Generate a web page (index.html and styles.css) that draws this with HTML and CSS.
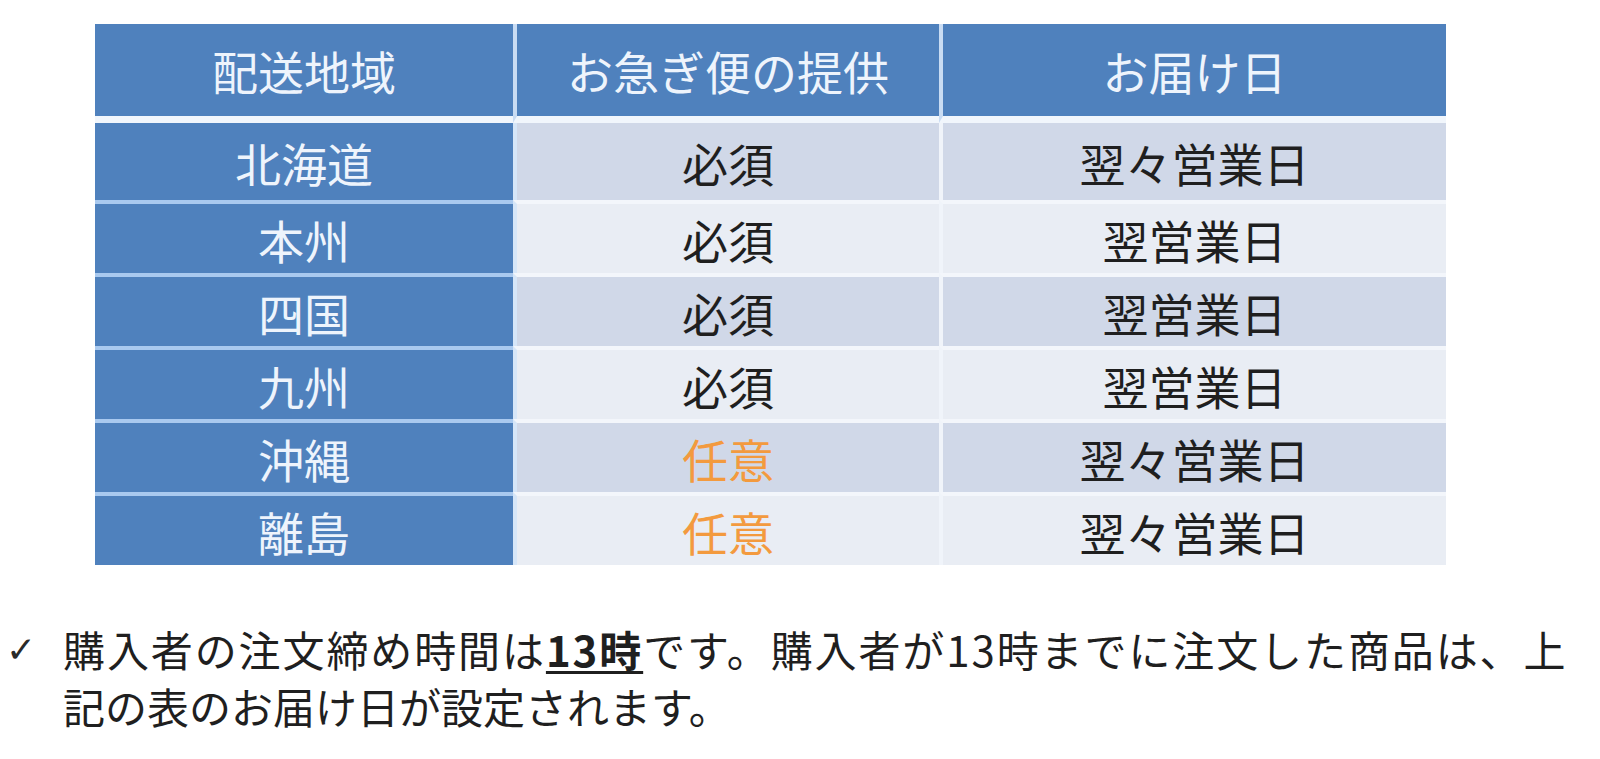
FILE: index.html
```html
<!DOCTYPE html>
<html lang="ja">
<head>
<meta charset="utf-8">
<title>配送地域とお届け日</title>
<link rel="stylesheet" href="styles.css">
</head>
<body>
<main class="page">
  <table class="delivery">
    <colgroup>
      <col class="c1"><col class="c2"><col class="c3">
    </colgroup>
    <thead>
      <tr><th>配送地域</th><th>お急ぎ便の提供</th><th>お届け日</th></tr>
    </thead>
    <tbody>
      <tr class="odd first"><th>北海道</th><td>必須</td><td>翌々営業日</td></tr>
      <tr class="even"><th>本州</th><td>必須</td><td>翌営業日</td></tr>
      <tr class="odd"><th>四国</th><td>必須</td><td>翌営業日</td></tr>
      <tr class="even"><th>九州</th><td>必須</td><td>翌営業日</td></tr>
      <tr class="odd"><th>沖縄</th><td class="opt">任意</td><td>翌々営業日</td></tr>
      <tr class="even"><th>離島</th><td class="opt">任意</td><td>翌々営業日</td></tr>
    </tbody>
  </table>
  <div class="note">
    <span class="check">✓</span>
    <p class="note-text"><span class="line wide">購入者の注文締め時間は<strong>13時</strong>です。購入者が13時までに注文した商品は、上</span><span class="line">記の表のお届け日が設定されます。</span></p>
  </div>
</main>
</body>
</html>
```
FILE: styles.css
```css
html, body {
  margin: 0;
  padding: 0;
  background: #ffffff;
}
body {
  font-family: "Noto Sans CJK JP", "Noto Sans", sans-serif;
  color: #1f1f1f;
}
.page {
  padding-top: 24px;
}
.delivery {
  margin-left: 95px;
  width: 1351px;
  border-collapse: separate;
  border-spacing: 0;
  table-layout: fixed;
  font-size: 46px;
  line-height: 1;
}
.c1 { width: 418px; }
.c2 { width: 426px; }
.c3 { width: 507px; }
.delivery th,
.delivery td {
  padding: 0;
  text-align: center;
  vertical-align: middle;
  font-weight: 400;
}
.delivery thead th {
  background: #4f81bd;
  color: #eef4fc;
  height: 92px;
  border-bottom: 7px solid #f1f6fc;
}
.delivery thead th + th {
  border-left: 4px solid #c9dcf3;
}
.delivery tbody th {
  background: #4f81bd;
  color: #eef4fc;
  border-top: 4px solid #a9c9ef;
}
.delivery tbody td {
  border-top: 4px solid #f3f6fb;
  border-left: 4px solid #f0f4fa;
}
.delivery tbody th + td {
  border-left-color: #d6e6f8;
}
.delivery tbody tr {
  height: 73px;
}
.delivery tbody tr.first {
  height: 77px;
}
.delivery tbody tr.first th,
.delivery tbody tr.first td {
  border-top: 0;
}
.delivery tr.odd td { background: #d0d8e8; }
.delivery tr.even td { background: #e9edf4; }
.delivery td.opt { color: #f39a3e; }

.note {
  display: flex;
  align-items: flex-start;
  margin-top: 55px;
  padding-left: 6px;
}
.check {
  width: 57px;
  font-size: 36px;
  line-height: 60px;
  color: #2a2a2a;
  font-family: "DejaVu Sans", sans-serif;
}
.note-text {
  margin: 0;
  font-size: 42px;
  line-height: 57px;
  color: #1f1f1f;
}
.line {
  display: block;
  white-space: nowrap;
}
.line.wide {
  letter-spacing: 1.9px;
}
.note-text strong {
  font-weight: 700;
  text-decoration: underline;
  text-decoration-thickness: 3px;
  text-underline-offset: 4px;
}
```
